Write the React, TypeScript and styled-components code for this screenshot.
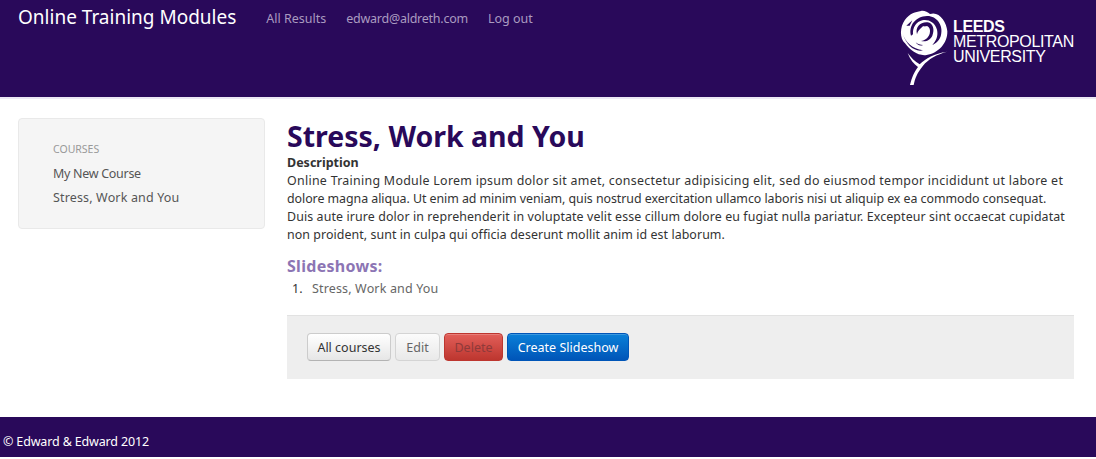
import React from 'react';
import styled, { createGlobalStyle } from 'styled-components';

const GlobalStyle = createGlobalStyle`
  html, body {
    margin: 0;
    padding: 0;
    background: #fff;
  }
  body {
    font-family: "Noto Sans", "Open Sans", sans-serif;
    font-size: 13px;
    line-height: 18px;
    color: #333;
  }
`;

const Page = styled.div`
  width: 1096px;
  height: 459px;
  overflow: hidden;
  display: flex;
  flex-direction: column;
`;

const Header = styled.header`
  height: 97px;
  flex: none;
  background: #29095a;
  border-bottom: 2px solid #ece8f5;
  display: flex;
  justify-content: space-between;
  padding: 0 16px 0 18px;
`;

const NavLeft = styled.div`
  display: flex;
  align-items: flex-start;
`;

const Brand = styled.div`
  font-size: 19px;
  line-height: 35px;
  color: #fff;
  margin-right: 30px;
`;

const NavLink = styled.a<{ $tight?: boolean }>`
  font-size: 12.5px;
  line-height: 37px;
  color: #a99bc0;
  margin-right: 20px;
  letter-spacing: ${(p) => (p.$tight ? '-0.25px' : '0')};
`;

const Body = styled.div`
  flex: 1;
  display: flex;
  gap: 22px;
  padding: 19px 22px 0 18px;
`;

const Sidebar = styled.aside`
  width: 247px;
  height: 111px;
  box-sizing: border-box;
  padding: 18px 34px;
  background: #f5f5f5;
  border: 1px solid #e9e9e9;
  border-radius: 4px;
`;

const SideHeading = styled.div`
  font-size: 10.5px;
  line-height: 24px;
  margin-bottom: 1px;
  color: #999;
  text-transform: uppercase;
`;

const SideLink = styled.div<{ $spacing: number }>`
  font-size: 12.5px;
  line-height: 24px;
  letter-spacing: ${(p) => p.$spacing}px;
  color: #555;
`;

const Main = styled.main`
  flex: 1;
  min-width: 0;
`;

const Title = styled.h1`
  margin: 0;
  font-size: 28.5px;
  line-height: 36px;
  font-weight: 700;
  color: #29095a;
`;

const Label = styled.div`
  font-size: 12.5px;
  font-weight: 700;
  line-height: 18px;
  color: #333;
`;

const Para = styled.p`
  margin: 0;
  font-size: 12.4px;
  line-height: 18px;
  color: #333;
`;

// the reference breaks these lines in its own font, so each line keeps its own spacing
const ParaLine = styled.span<{ $spacing: number }>`
  display: block;
  white-space: nowrap;
  letter-spacing: ${(p) => p.$spacing}px;
`;

const SubTitle = styled.h2`
  margin: 12px 0 0;
  font-size: 16px;
  line-height: 20px;
  font-weight: 700;
  letter-spacing: 0.3px;
  color: #8c75b4;
`;

const List = styled.ol`
  margin: 4px 0 0;
  padding: 0;
  list-style: none;
  font-size: 12.5px;
  line-height: 18px;
  letter-spacing: 0.15px;
  color: #666;
`;

const ListItem = styled.li`
  display: flex;
  &::before {
    content: '1.';
    width: 20px;
    margin-left: 5px;
    color: #333;
  }
`;

const Actions = styled.div`
  margin-top: 17px;
  height: 64px;
  box-sizing: border-box;
  background: #eee;
  border-top: 1px solid #e2e2e2;
  padding: 17px 20px;
  display: flex;
  gap: 4px;
  align-items: flex-start;
`;

const tones = {
  plain: 'color:#333;background:linear-gradient(#fff,#e6e6e6);border-color:#ccc #ccc #b3b3b3;',
  faded: 'color:#666;background:linear-gradient(#fbfbfb,#e9e9e9);border-color:#d4d4d4;',
  danger: 'color:#8f3a3a;background:linear-gradient(#e25f59,#bd362f);border-color:#bd362f;',
  primary: 'color:#fff;background:linear-gradient(#0a80d8,#0055b8);border-color:#0055b8;',
};

const Btn = styled.button<{ $tone: keyof typeof tones; $w: number }>`
  ${(p) => tones[p.$tone]}
  width: ${(p) => p.$w}px;
  height: 28px;
  padding: 0;
  border-width: 1px;
  border-style: solid;
  border-radius: 4px;
  font-family: inherit;
  font-size: 12.5px;
  box-shadow: inset 0 1px 0 rgba(255, 255, 255, 0.2);
`;

const Footer = styled.footer`
  height: 40px;
  flex: none;
  margin-bottom: 2px;
  background: #29095a;
  color: #fff;
  font-size: 12.5px;
  line-height: 50px;
  letter-spacing: -0.15px;
  padding-left: 3px;
`;

const Logo = styled.div`
  width: 185px;
  display: flex;
  padding-top: 5px;
  align-items: flex-start;
`;

const LogoText = styled.div`
  font-family: "Liberation Sans", Arial, sans-serif;
  font-size: 16px;
  line-height: 15px;
  color: #fff;
  margin: 14px 0 0 -2px;
  letter-spacing: -0.35px;
  white-space: nowrap;
`;

const LogoLine = styled.div<{ $bold?: boolean }>`
  font-weight: ${(p) => (p.$bold ? 700 : 400)};
`;

// traced over the rose at 3x, so the viewBox is 3 times the pixel size
const Rose = () => (
  <svg width="60" height="85" viewBox="0 0 180 255">
    <path
      fill="#fff"
      d="M30 44C46 24 60 22 78 18c10-2 20 4 27 9 26-10 50 22 52 52 1 36-27 66-62 71-25 4-50-14-65-35C14 100 14 66 30 44z"
    />
    <g fill="#29095a">
      <path d="M48 92C40 62 62 34 96 33c28-1 50 27 42 57-3 14-13 24-26 30 12-14 18-28 14-46-6-22-26-32-44-28C64 50 52 68 54 88z" />
      <path d="M66 88c-6-22 10-38 32-36 16 2 22 22 14 40-6 12-18 20-34 16 12-2 22-10 26-22 3-10 0-20-8-22-12-2-26 8-30 24z" />
      <path d="M24 88c8 24 28 44 60 48-26 6-50-16-60-48z" />
      <path d="M34 62l18-16-8 16z" />
      <path d="M62 112c6 6 14 8 22 8-8 4-18 0-22-8z" />
    </g>
    <path fill="#fff" d="M80 68c3-5 8-5 10-1 3-4 10-3 10 3 0 7-6 13-10 16-4-4-12-11-10-18z" />
    <path
      fill="#fff"
      d="M45 240c6-24 12-38 24-54-12-8-24-22-31-42 10 14 22 26 36 34 18-18 44-32 82-38-30 8-56 22-72 42-18 22-24 38-28 58z"
    />
  </svg>
);

const descriptionLines = [
  { text: 'Online Training Module Lorem ipsum dolor sit amet, consectetur adipisicing elit, sed do eiusmod tempor incididunt ut labore et', spacing: 0.29 },
  { text: 'dolore magna aliqua. Ut enim ad minim veniam, quis nostrud exercitation ullamco laboris nisi ut aliquip ex ea commodo consequat.', spacing: -0.05 },
  { text: 'Duis aute irure dolor in reprehenderit in voluptate velit esse cillum dolore eu fugiat nulla pariatur. Excepteur sint occaecat cupidatat', spacing: 0.11 },
  { text: 'non proident, sunt in culpa qui officia deserunt mollit anim id est laborum.', spacing: 0.07 },
];

export default function App() {
  return (
    <>
      <GlobalStyle />
      <Page>
        <Header>
          <NavLeft>
            <Brand>Online Training Modules</Brand>
            <NavLink>All Results</NavLink>
            <NavLink $tight>edward@aldreth.com</NavLink>
            <NavLink>Log out</NavLink>
          </NavLeft>
          <Logo>
            <Rose />
            <LogoText>
              <LogoLine $bold>LEEDS</LogoLine>
              <LogoLine>METROPOLITAN</LogoLine>
              <LogoLine>UNIVERSITY</LogoLine>
            </LogoText>
          </Logo>
        </Header>
        <Body>
          <Sidebar>
            <SideHeading>Courses</SideHeading>
            <SideLink $spacing={-0.3}>My New Course</SideLink>
            <SideLink $spacing={0.15}>Stress, Work and You</SideLink>
          </Sidebar>
          <Main>
            <Title>Stress, Work and You</Title>
            <Label>Description</Label>
            <Para>
              {descriptionLines.map((line) => (
                <ParaLine key={line.text} $spacing={line.spacing}>
                  {line.text}
                </ParaLine>
              ))}
            </Para>
            <SubTitle>Slideshows:</SubTitle>
            <List>
              <ListItem>Stress, Work and You</ListItem>
            </List>
            <Actions>
              <Btn $tone="plain" $w={84}>All courses</Btn>
              <Btn $tone="faded" $w={45}>Edit</Btn>
              <Btn $tone="danger" $w={59}>Delete</Btn>
              <Btn $tone="primary" $w={122}>Create Slideshow</Btn>
            </Actions>
          </Main>
        </Body>
        <Footer>© Edward &amp; Edward 2012</Footer>
      </Page>
    </>
  );
}
